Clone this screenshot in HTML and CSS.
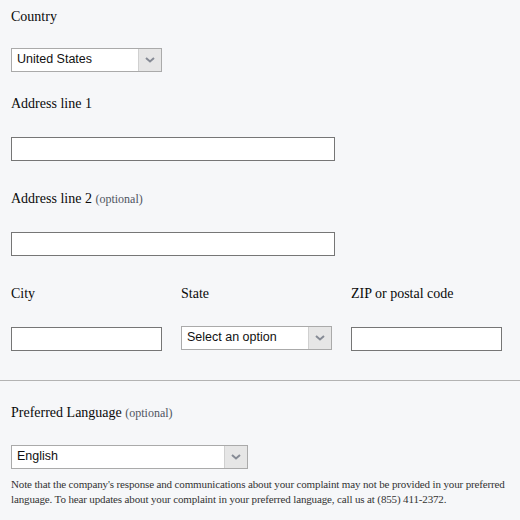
FILE: index.html
```html
<!DOCTYPE html>
<html lang="en">
<head>
<meta charset="utf-8">
<title>Address form</title>
<link rel="stylesheet" href="styles.css">
</head>
<body>
<div class="page">
  <div class="field field-country">
    <label class="label">Country</label>
    <div class="select select-short">
      <span class="select-value">United States</span>
      <span class="select-arrow"><svg width="10" height="6" viewBox="0 0 10 6"><path d="M1 1 L5 4.5 L9 1" fill="none" stroke="#868b95" stroke-width="2"/></svg></span>
    </div>
  </div>
  <div class="field">
    <label class="label">Address line 1</label>
    <input class="input input-wide" type="text">
  </div>
  <div class="field">
    <label class="label">Address line 2 <span class="optional">(optional)</span></label>
    <input class="input input-wide" type="text">
  </div>
  <div class="row">
    <div class="col">
      <label class="label">City</label>
      <input class="input" type="text">
    </div>
    <div class="col">
      <label class="label">State</label>
      <div class="select select-state">
        <span class="select-value">Select an option</span>
        <span class="select-arrow"><svg width="10" height="6" viewBox="0 0 10 6"><path d="M1 1 L5 4.5 L9 1" fill="none" stroke="#868b95" stroke-width="2"/></svg></span>
      </div>
    </div>
    <div class="col">
      <label class="label">ZIP or postal code</label>
      <input class="input" type="text">
    </div>
  </div>
</div>
<hr class="divider">
<div class="page">
  <div class="field field-lang">
    <label class="label">Preferred Language <span class="optional">(optional)</span></label>
    <div class="select select-lang">
      <span class="select-value">English</span>
      <span class="select-arrow"><svg width="10" height="6" viewBox="0 0 10 6"><path d="M1 1 L5 4.5 L9 1" fill="none" stroke="#868b95" stroke-width="2"/></svg></span>
    </div>
    <p class="note">Note that the company's response and communications about your complaint may not be provided in your preferred language. To hear updates about your complaint in your preferred language, call us at (855) 411-2372.</p>
  </div>
</div>
</body>
</html>
```

FILE: styles.css
```css
html, body {
  margin: 0;
  padding: 0;
  background: #f6f7f9;
}
body {
  font-family: "Liberation Serif", "Times New Roman", serif;
  color: #0a0a0a;
}
.page {
  padding: 0 11px;
}
.page:first-child {
  padding-top: 9px;
}
.label {
  display: block;
  font-size: 14px;
  line-height: 16px;
  margin-bottom: 25px;
}
.field-country .label {
  margin-bottom: 23px;
}
.optional {
  font-size: 12px;
  color: #4f5561;
}
.field {
  margin-bottom: 30px;
}
.field-country {
  margin-bottom: 24px;
}
.input {
  display: block;
  box-sizing: border-box;
  width: 151px;
  height: 24px;
  margin: 0;
  border: 1px solid #767676;
  background: #ffffff;
  padding: 0 5px;
  font-family: "Liberation Sans", Arial, sans-serif;
  font-size: 12.5px;
}
.input-wide {
  width: 324px;
}
.row {
  display: grid;
  grid-template-columns: 151px 151px 151px;
  column-gap: 19px;
  padding-bottom: 29px;
}
.row .label {
  margin-bottom: 25px;
}
.select {
  box-sizing: border-box;
  display: flex;
  height: 24px;
  border: 1px solid #aaaaaa;
  background: #ffffff;
  font-family: "Liberation Sans", Arial, sans-serif;
  font-size: 12.5px;
  color: #111111;
}
.select-short { width: 151px; }
.select-state { width: 151px; margin-top: -1px; }
.select-lang { width: 237px; }
.select-value {
  flex: 1;
  padding-left: 5px;
  line-height: 21px;
  white-space: nowrap;
  overflow: hidden;
}
.select-arrow {
  width: 22px;
  background: #e6e6e6;
  border-left: 1px solid #d0d0d0;
  display: flex;
  align-items: center;
  justify-content: center;
}
.divider {
  margin: 0;
  border: 0;
  border-top: 1px solid #b3b3b3;
  height: 0;
}
.field-lang {
  padding-top: 24px;
  margin-bottom: 0;
}
.field-lang .label {
  margin-bottom: 24px;
}
.note {
  margin: 8px 0 0;
  font-size: 11px;
  letter-spacing: -0.14px;
  line-height: 15px;
  color: #333333;
}
```
